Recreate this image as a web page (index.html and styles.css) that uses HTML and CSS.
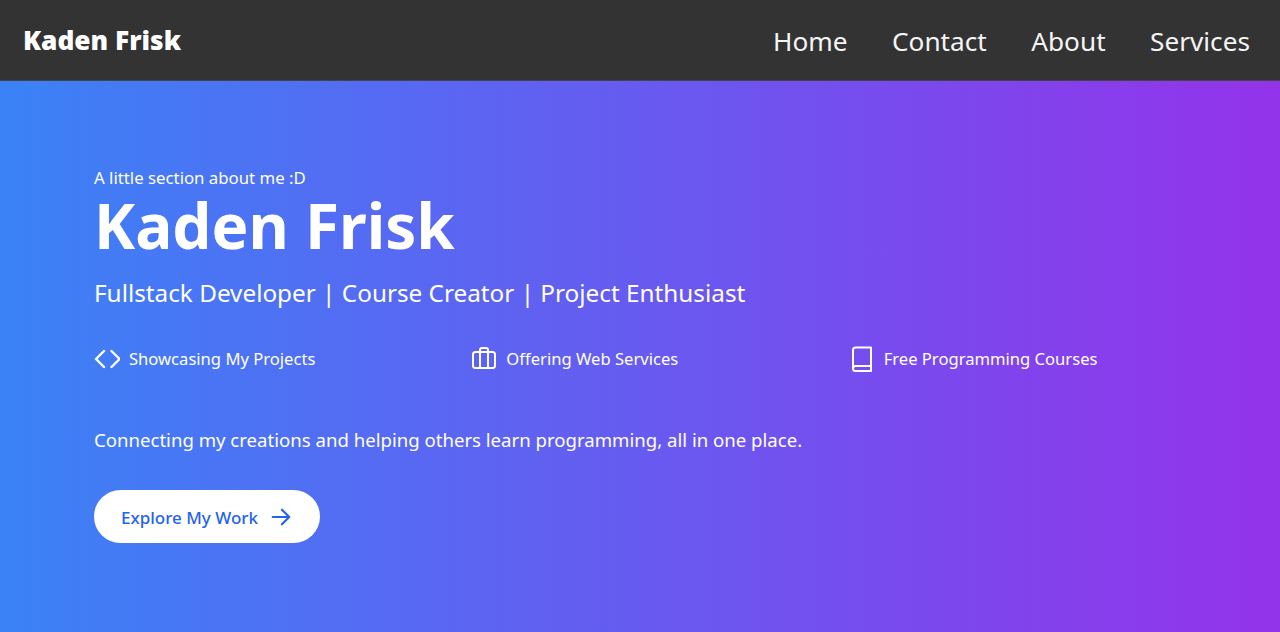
FILE: index.html
```html
<!DOCTYPE html>
<html>
<head>
<meta charset="UTF-8">
<meta name="viewport" content="width=device-width, initial-scale=1.0">
<title>Kaden Frisk</title>
<link rel="stylesheet" href="styles.css">
</head>
<body>

<!-- NAV -->
<header class="topbar">
<div class="logo">Kaden Frisk</div>
<nav class="links">
<a href="#">Home</a>
<a href="#">Contact</a>
<a href="#">About</a>
<a href="#">Services</a>
</nav>
</header>

<!-- HERO -->
<section class="hero">
<p class="kicker">A little section about me :D</p>
<h1>Kaden Frisk</h1>
<p class="role">Fullstack Developer | Course Creator | Project Enthusiast</p>

<div class="features">
<div class="feature">
<svg class="icon code" viewBox="0 0 26 26"><path d="M10 5l-8 8 8 8M17.500 5l8 8-8 8"/></svg>
<span>Showcasing My Projects</span>
</div>
<div class="feature">
<svg class="icon" viewBox="0 0 26 26"><rect x="2" y="6" width="22" height="16" rx="2.500"/><path d="M9 22V4a2 2 0 0 1 2-2h4a2 2 0 0 1 2 2v18"/></svg>
<span>Offering Web Services</span>
</div>
<div class="feature">
<svg class="icon" viewBox="0 0 26 26"><path d="M4 22.500V4a2.500 2.500 0 0 1 2.500-2.500H22V25H6.500A2.500 2.500 0 0 1 4 22.500a2.500 2.500 0 0 1 2.500-2.500H22"/></svg>
<span>Free Programming Courses</span>
</div>
</div>

<p class="blurb">Connecting my creations and helping others learn programming, all in one place.</p>

<a class="cta" href="#">Explore My Work
<svg class="arrow" viewBox="0 0 24 24"><path d="M3 12h18M13 4l8 8-8 8"/></svg>
</a>
</section>

</body>
</html>
```

FILE: styles.css
```css
body{
margin:0;
font-family:"Noto Sans","Open Sans",sans-serif;
background:#333;
color:white;
}

/* NAV */
.topbar{
height:81px;
box-sizing:border-box;
background:#333;
border-bottom:1px solid #444;
display:flex;
align-items:center;
justify-content:space-between;
padding:0 30px 0 23px;
}

.logo{
font-size:26.300px;
font-weight:900;
}

.links{
display:flex;
gap:44.500px;
padding-top:1px;
}

.links a{
color:#f5f5f5;
text-decoration:none;
font-size:26.200px;
}

/* HERO */
.hero{
height:551px;
box-sizing:border-box;
padding:86px 94px 0;
background:linear-gradient(to right,#3b82f6,#9333ea);
}

.kicker{
margin:0;
font-size:16.800px;
line-height:22px;
}

h1{
margin:0;
font-size:62px;
line-height:72px;
font-weight:700;
}

.role{
margin:16px 0 0;
font-size:24.300px;
line-height:32px;
}

.features{
display:grid;
grid-template-columns:repeat(3,1fr);
gap:40px;
margin-top:37px;
}

.feature{
display:flex;
align-items:center;
gap:9px;
font-size:16.600px;
line-height:26px;
}

.icon{
width:26px;
height:26px;
fill:none;
stroke:white;
stroke-width:2;
stroke-linecap:round;
stroke-linejoin:round;
}

.code{
stroke-width:2.400;
}

.blurb{
margin:54px 0 0;
font-size:18.600px;
line-height:28px;
}

.cta{
display:inline-flex;
align-items:center;
gap:12px;
margin-top:36px;
height:53px;
box-sizing:border-box;
padding:1px 28px 0 27px;
border-radius:27px;
background:white;
color:#2563eb;
font-size:17px;
font-weight:500;
text-decoration:none;
}

.arrow{
width:22px;
height:22px;
fill:none;
stroke:#2563eb;
stroke-width:2.400;
stroke-linecap:round;
stroke-linejoin:round;
}
```
